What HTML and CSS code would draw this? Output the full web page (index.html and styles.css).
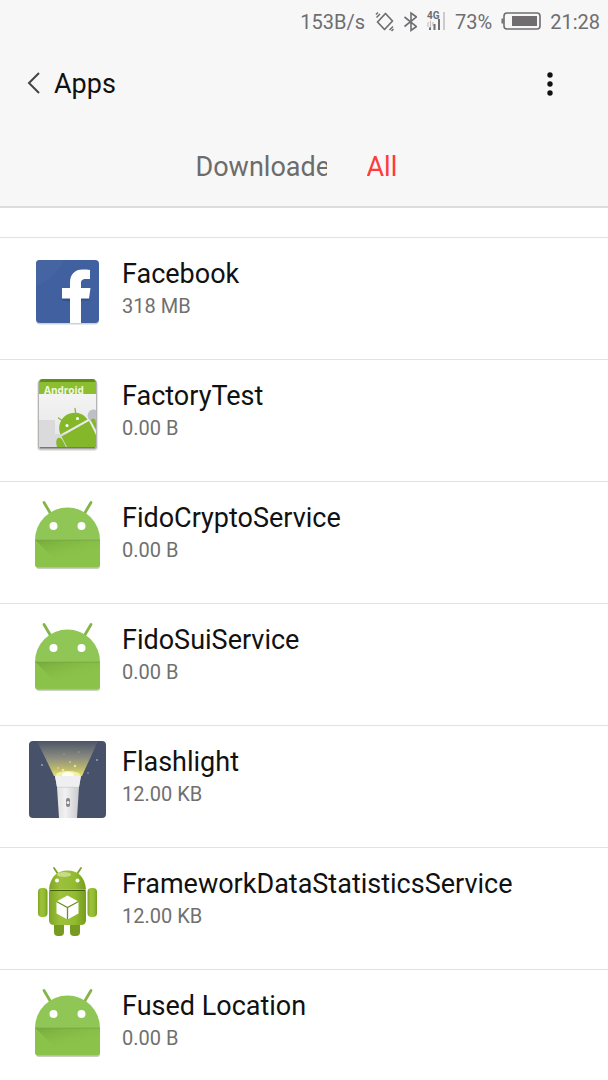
FILE: index.html
```html
<!DOCTYPE html>
<html lang="en">

<head>
    <meta charset="UTF-8">
    <meta name="viewport" content="width=device-width, initial-scale=1.0">
    <title>Apps</title>
    <link rel="stylesheet" href="styles.css">
</head>

<body>
    <!-- Shared robot icon and gradients -->
    <svg class="defs" aria-hidden="true">
        <defs>
            <linearGradient id="fold" x1="0" y1="0" x2="0.6" y2="1">
                <stop offset="0" stop-color="#5f8f2c" stop-opacity="0.5" />
                <stop offset="0.7" stop-color="#7fb53c" stop-opacity="0" />
            </linearGradient>
            <linearGradient id="beam" x1="0" y1="0" x2="0" y2="1">
                <stop offset="0" stop-color="#4c5568" />
                <stop offset="0.5" stop-color="#8f8f80" />
                <stop offset="0.8" stop-color="#bdbb6c" />
                <stop offset="1" stop-color="#e4e272" />
            </linearGradient>
            <linearGradient id="torch" x1="0" y1="0" x2="1" y2="0">
                <stop offset="0" stop-color="#dcdcde" />
                <stop offset="0.4" stop-color="#f1f1f2" />
                <stop offset="1" stop-color="#c4c4c8" />
            </linearGradient>
            <linearGradient id="figure" x1="0" y1="0" x2="1" y2="0">
                <stop offset="0" stop-color="#7fa422" />
                <stop offset="0.3" stop-color="#9cc23c" />
                <stop offset="0.7" stop-color="#93bb30" />
                <stop offset="1" stop-color="#769c1e" />
            </linearGradient>
            <linearGradient id="paper" x1="0" y1="0" x2="0" y2="1">
                <stop offset="0" stop-color="#f8f8f8" />
                <stop offset="1" stop-color="#e4e4e6" />
            </linearGradient>
            <symbol id="robot" viewBox="0 4 80 80">
                <path d="M8 49.500V74q0 3 3 3h58q3 0 3-3V49.500z" fill="#c9cfc2" />
                <path d="M16 10.500l6.500 11M63 10.500l-6.500 11" stroke="#83b548" stroke-width="2.800" stroke-linecap="round" />
                <path d="M7 48a32.500 32.500 0 0 1 65 0z" fill="#8fc655" />
                <path d="M7 48H72v24.500q0 3-3 3H10q-3 0-3-3z" fill="#8bc34a" />
                <path d="M7.500 48H72v27H34z" fill="url(#fold)" />
                <path d="M7 48.200H72" stroke="#77a843" stroke-width="0.800" />
                <circle cx="25.500" cy="34" r="4" fill="#fff" />
                <circle cx="53.500" cy="34" r="4" fill="#fff" />
            </symbol>
        </defs>
    </svg>

    <header class="header">
        <div class="status-bar">
            <span>153B/s</span>
            <svg class="status-icon" viewBox="0 0 20 22" width="20" height="22" aria-hidden="true">
                <path d="M11.500 2.500L18.500 10 10.500 18.500 3.500 11z" fill="none" stroke="#6f6d70" stroke-width="1.700" stroke-linejoin="round" />
                <path d="M2.500 6.500l3.500-3.500M2 3.500l2-2M15.500 19l3.500-3.500M17.500 20l2-2" fill="none" stroke="#6f6d70" stroke-width="1.500" />
            </svg>
            <svg class="status-icon" viewBox="0 0 14 22" width="14" height="22" aria-hidden="true">
                <path d="M1.500 6l12 9.500L8 19.500V2l5.500 4L1.500 15.500" fill="none" stroke="#6f6d70" stroke-width="1.600" />
            </svg>
            <svg class="status-icon" viewBox="0 0 20 22" width="20" height="22" aria-hidden="true">
                <text x="1" y="8" class="network">4G</text>
                <path d="M2 11v5M4.500 9.500v8M7 11v4" stroke="#c2c2c4" stroke-width="1.200" />
                <path d="M4 16.500v2.500M8.500 13v6M13 8v11" stroke="#6f6d70" stroke-width="2" />
                <path d="M18 1v18" stroke="#cbcbcd" stroke-width="2" />
            </svg>
            <span>73%</span>
            <svg class="status-icon" viewBox="0 0 40 22" width="40" height="22" aria-hidden="true">
                <rect x="3" y="2" width="36" height="16" rx="3" fill="none" stroke="#6f6d70" stroke-width="1.600" />
                <path d="M1.500 7.500v5" stroke="#6f6d70" stroke-width="2" />
                <rect x="11" y="5" width="25" height="10" fill="#6f6d70" />
            </svg>
            <span>21:28</span>
        </div>

        <div class="title-bar">
            <button class="back-button" aria-label="Back">
                <svg viewBox="0 0 14 24" width="14" height="24">
                    <path d="M13 1L3 11l10 10" fill="none" stroke="#444" stroke-width="2" />
                </svg>
            </button>
            <h1>Apps</h1>
            <button class="menu-button" aria-label="More options">
                <svg viewBox="0 0 6 24" width="6" height="24">
                    <circle cx="3" cy="3" r="2.700" fill="#111" />
                    <circle cx="3" cy="12" r="2.700" fill="#111" />
                    <circle cx="3" cy="21" r="2.700" fill="#111" />
                </svg>
            </button>
        </div>

        <nav class="tabs">
            <button class="tab">Downloaded</button>
            <button class="tab active">All</button>
        </nav>
    </header>

    <main>
        <ul class="app-list">
            <!-- end of the row scrolled under the header -->
            <li class="app scrolled"></li>
            <li class="app">
                <svg class="app-icon" viewBox="0 0 80 80" aria-hidden="true">
                    <rect x="8" y="9.500" width="63" height="63" rx="4" fill="#cfd1d6" />
                    <rect x="8" y="8" width="63" height="63" rx="4" fill="#40609f" />
                    <path d="M8 34A50 50 0 0 0 36 8H12q-4 0-4 4z" fill="#4564a2" />
                    <path d="M34 46.500v2l8 1v-3zM53 46.500h8.500l-.4 2H53z" fill="#34508a" />
                    <path d="M42 71V46.500h-8V36h8v-5c0-9 5-13.500 12.500-13.500 3 0 5.500.1 7.500.5v9h-4c-4 0-5 1.500-5 4.500V36h9.500l-1.500 10.500h-8V71z" fill="#fff" />
                </svg>
                <div class="app-info">
                    <h2>Facebook</h2>
                    <p>318 MB</p>
                </div>
            </li>
            <li class="app">
                <svg class="app-icon" viewBox="0 0 80 80" aria-hidden="true">
                    <rect x="9" y="7" width="61" height="70" rx="4" fill="#e6e6e6" />
                    <rect x="10" y="6" width="59" height="69.500" rx="3" fill="#b4b5b1" />
                    <path d="M12 73.500h55" stroke="#77786f" stroke-width="1.500" />
                    <rect x="11" y="5" width="57" height="68" rx="2" fill="url(#paper)" />
                    <path d="M11 46h16v14h12v13H11z" fill="#dadadd" />
                    <path d="M11 20V8q0-3 3-3h51q3 0 3 3v12z" fill="#8bbf30" />
                    <path d="M11.500 8Q12 5 15 5h49q3 0 3.500 3z" fill="#618d1c" />
                    <text x="16" y="20" class="card-label">Android</text>
                    <path d="M68 36a6 6 0 1 0 0 11z" fill="#bfc0c6" />
                    <path d="M32.500 60.500A15.500 15.500 0 0 1 59.500 45.500z" fill="#84b82a" />
                    <path d="M33.500 62.500L61 47l7 14V73H39z" fill="#84b82a" />
                    <path d="M29 73q-2-7 1-9 3-1 5 3l3 6zM62.500 46q3-3 5 0l.5 3v7z" fill="#84b82a" />
                    <path d="M36 48l-5.500-4M48 41l-1-6.500" stroke="#84b82a" stroke-width="1.300" stroke-linecap="round" />
                    <circle cx="39" cy="51.500" r="1.500" fill="#fff" />
                    <circle cx="49.500" cy="44.500" r="1.500" fill="#fff" />
                </svg>
                <div class="app-info">
                    <h2>FactoryTest</h2>
                    <p>0.00 B</p>
                </div>
            </li>
            <li class="app">
                <svg class="app-icon" aria-hidden="true"><use href="#robot" /></svg>
                <div class="app-info">
                    <h2>FidoCryptoService</h2>
                    <p>0.00 B</p>
                </div>
            </li>
            <li class="app">
                <svg class="app-icon" aria-hidden="true"><use href="#robot" /></svg>
                <div class="app-info">
                    <h2>FidoSuiService</h2>
                    <p>0.00 B</p>
                </div>
            </li>
            <li class="app">
                <svg class="app-icon" viewBox="0 0 80 80" aria-hidden="true">
                    <rect x="1" y="1" width="77" height="77" rx="4" fill="#47516a" />
                    <path d="M9 1h61L54 36H26z" fill="url(#beam)" />
                    <ellipse cx="40" cy="35" rx="12" ry="4" fill="#f3f2a4" />
                    <ellipse cx="40" cy="35" rx="6" ry="3" fill="#fffff0" />
                    <g fill="#e9e68e">
                        <circle cx="35" cy="30" r="1.300" />
                        <circle cx="47" cy="26" r="1.200" />
                        <circle cx="42" cy="22" r="0.800" />
                        <circle cx="30" cy="28" r="0.800" />
                    </g>
                    <g fill="#9da4b0">
                        <circle cx="14" cy="25" r="1" />
                        <circle cx="69" cy="20" r="1" />
                        <circle cx="60" cy="33" r="0.800" />
                        <circle cx="36" cy="14" r="0.700" />
                        <circle cx="51" cy="12" r="0.700" />
                    </g>
                    <path d="M27 36h26l-2 11-2 31H31l-2-31z" fill="url(#torch)" />
                    <path d="M27 36h26l-2 11H29z" fill="#efeff1" />
                    <path d="M29 47.300h22" stroke="#cdcdd0" stroke-width="0.800" />
                    <rect x="38" y="58" width="4" height="9" rx="2" fill="#85858a" />
                    <circle cx="40" cy="62.500" r="1.500" fill="#eee" />
                </svg>
                <div class="app-info">
                    <h2>Flashlight</h2>
                    <p>12.00 KB</p>
                </div>
            </li>
            <li class="app">
                <svg class="app-icon" viewBox="0 0 80 80" aria-hidden="true">
                    <path d="M26 6l4 6M53 6l-4 6" stroke="#7da12a" stroke-width="1.800" stroke-linecap="round" />
                    <rect x="26" y="56" width="10" height="18" rx="4" fill="#769a22" />
                    <rect x="42" y="56" width="10" height="18" rx="4" fill="#769a22" />
                    <rect x="10" y="26" width="9.500" height="29" rx="4" fill="url(#figure)" />
                    <rect x="59.500" y="26" width="9.500" height="29" rx="4" fill="url(#figure)" />
                    <path d="M21 27.500C22 15 29 8.500 39.500 8.500S57 15 58 27.500z" fill="url(#figure)" />
                    <path d="M21 29h37v29q0 5-5 5H26q-5 0-5-5z" fill="url(#figure)" />
                    <path d="M21.500 28.300h36" stroke="#44600c" stroke-width="1.200" />
                    <ellipse cx="36" cy="12.500" rx="7" ry="2.500" fill="#c5db85" />
                    <circle cx="29" cy="18.500" r="2" fill="#fff" />
                    <circle cx="49.500" cy="18.500" r="2" fill="#fff" />
                    <path d="M39.500 33.500l11 6v12l-11 6-11-6v-12z" fill="#fff" />
                    <path d="M28.500 39.500l11 6 11-6M39.500 45.500v12" fill="none" stroke="#6d8c2a" stroke-width="1.300" />
                </svg>
                <div class="app-info">
                    <h2>FrameworkDataStatisticsService</h2>
                    <p>12.00 KB</p>
                </div>
            </li>
            <li class="app">
                <svg class="app-icon" aria-hidden="true"><use href="#robot" /></svg>
                <div class="app-info">
                    <h2>Fused Location</h2>
                    <p>0.00 B</p>
                </div>
            </li>
        </ul>
    </main>
</body>

</html>
```
FILE: styles.css
```css
* {
    box-sizing: border-box;
}

body {
    display: flex;
    flex-direction: column;
    height: 100vh;
    margin: 0;
    background-color: #ffffff;
    color: #111111;
    font-family: Roboto, sans-serif;
    overflow: hidden;
}

button {
    padding: 0;
    border: none;
    background: none;
    color: inherit;
    font-family: inherit;
    cursor: pointer;
}

.defs {
    position: absolute;
    width: 0;
    height: 0;
}

.header {
    flex-shrink: 0;
    background-color: #f7f7f7;
    border-bottom: 2px solid #dcdcdc;
}

/* Status bar */
.status-bar {
    display: flex;
    align-items: center;
    justify-content: flex-end;
    gap: 9px;
    height: 44px;
    padding-right: 8px;
    color: #6f6d70;
    font-size: 20px;
}

.status-icon {
    flex-shrink: 0;
}

.network {
    font-size: 10px;
    font-weight: 700;
    fill: #6f6d70;
}

/* Title bar */
.title-bar {
    display: flex;
    align-items: center;
    height: 80px;
    padding: 0 55px 0 26px;
}

.title-bar svg {
    display: block;
}

h1 {
    flex: 1;
    margin: 0 0 0 14px;
    font-size: 27px;
    font-weight: 400;
}

/* Tabs */
.tabs {
    display: flex;
    justify-content: center;
    gap: 40px;
    height: 82px;
    padding-top: 4px;
}

.tab {
    width: 131px;
    color: #6c6c6c;
    font-size: 27px;
    text-align: left;
    white-space: nowrap;
    overflow: hidden;
}

.tab.active {
    width: 46px;
    color: #ff3b3b;
}

/* App list */
main {
    flex: 1;
    min-height: 0;
    overflow: hidden;
}

.app-list {
    margin: 0;
    padding: 0;
    list-style: none;
}

.app {
    display: flex;
    gap: 14px;
    height: 122px;
    padding: 14px 28px;
    border-bottom: 1px solid #e2e2e2;
}

.app.scrolled {
    height: 30px;
}

.app-icon {
    flex-shrink: 0;
    width: 80px;
    height: 80px;
}

.card-label {
    font-family: "Open Sans", sans-serif;
    font-size: 10px;
    font-weight: 700;
    fill: #f2f8e4;
}

.app-info {
    padding-top: 6px;
}

h2 {
    margin: 0;
    font-size: 27px;
    font-weight: 400;
    line-height: 32px;
}

p {
    margin: 0;
    color: #707070;
    font-size: 20px;
    line-height: 32px;
}
```
